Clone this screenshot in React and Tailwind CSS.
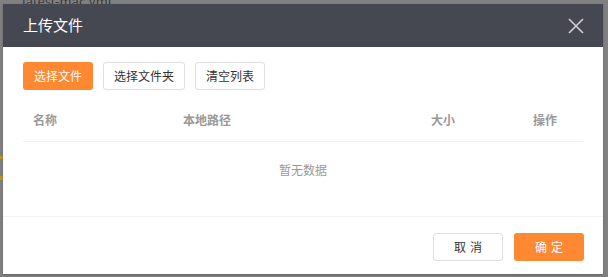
const columns = [
  { label: '名称', className: 'w-[150px] pl-[10px]' },
  { label: '本地路径', className: 'flex-1 pl-[10px]' },
  { label: '大小', className: 'w-[101px] pl-[9px]' },
  { label: '操作', className: 'w-[60px] pl-[10px]' },
];

export default function App() {
  return (
    <div
      className="relative w-[608px] h-[277px] overflow-hidden bg-[#808080]"
      style={{ fontFamily: '"Noto Sans CJK SC", "Noto Sans", sans-serif' }}
    >
      <div className="absolute left-[22px] -top-[9px] text-[13px] text-[#3a3a3a]">latest-mac.yml</div>
      <div className="absolute left-0 top-[156px] w-[3px] h-[3px] bg-[#b8962e]" />
      <div className="absolute left-0 top-[176px] w-[3px] h-[4px] bg-[#b8962e]" />

      <div className="absolute left-[3px] top-[4px] w-[600px] h-[270px] bg-white flex flex-col shadow-[0_1px_2px_rgba(0,0,0,0.25)]">
        <div className="h-[43px] shrink-0 bg-[#454751] flex items-center justify-between pl-[20px] pr-[19px]">
          <span className="text-[15px] text-white">上传文件</span>
          <svg width="16" height="16" viewBox="0 0 16 16" className="text-[#d0d0d4]">
            <path d="M1 1 L15 15 M15 1 L1 15" stroke="currentColor" strokeWidth="1.6" fill="none" />
          </svg>
        </div>

        <div className="px-[20px] pt-[15px] flex-1">
          <div className="flex gap-[10px]">
            <button className="h-[28px] w-[70px] rounded-[3px] bg-[#ff8833] text-white text-[12px]">选择文件</button>
            <button className="h-[28px] w-[82px] rounded-[3px] border border-[#dcdfe6] bg-white text-[#333] text-[12px]">选择文件夹</button>
            <button className="h-[28px] w-[70px] rounded-[3px] border border-[#dcdfe6] bg-white text-[#333] text-[12px]">清空列表</button>
          </div>

          <div className="mt-[18px] flex h-[34px] items-start pt-[3px] border-b border-[#f2f2f2] text-[12px] font-bold text-[#999]">
            {columns.map((c) => (
              <div key={c.label} className={c.className}>{c.label}</div>
            ))}
          </div>
          <div className="h-[60px] flex items-center justify-center text-[12px] text-[#999] -mt-[1px] pb-[2px]">暂无数据</div>
        </div>

        <div className="h-[58px] shrink-0 border-t border-[#f2f2f2] flex items-start justify-end gap-[11px] pr-[19px] pt-[16px]">
          <button className="h-[28px] w-[70px] rounded-[3px] border border-[#dcdfe6] bg-white text-[#333] text-[12px] tracking-[4px] pl-[4px]">取消</button>
          <button className="h-[28px] w-[70px] rounded-[3px] bg-[#ff8833] text-white text-[12px] tracking-[4px] pl-[4px]">确定</button>
        </div>
      </div>
    </div>
  );
}
